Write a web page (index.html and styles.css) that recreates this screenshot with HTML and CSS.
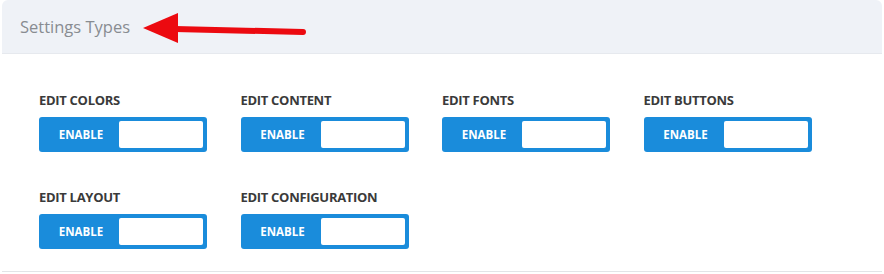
FILE: index.html
```html
<!DOCTYPE html>
<html>
<head>
<meta charset="utf-8">
<link rel="stylesheet" href="styles.css">
</head>
<body>
<div class="panel">
  <div class="panel-header">
    <span class="panel-title">Settings Types</span>
    <svg class="arrow" width="170" height="40" viewBox="0 0 170 40">
      <path d="M32 16 L160 19" stroke="#ec0a10" stroke-width="6" stroke-linecap="round" fill="none"/>
      <polygon points="0,15 35,0 35,30" fill="#ec0a10"/>
    </svg>
  </div>
  <div class="panel-body">
    <div class="setting">
      <div class="setting-label">Edit Colors</div>
      <div class="toggle"><span class="toggle-text">Enable</span><span class="toggle-box"></span></div>
    </div>
    <div class="setting">
      <div class="setting-label">Edit Content</div>
      <div class="toggle"><span class="toggle-text">Enable</span><span class="toggle-box"></span></div>
    </div>
    <div class="setting">
      <div class="setting-label">Edit Fonts</div>
      <div class="toggle"><span class="toggle-text">Enable</span><span class="toggle-box"></span></div>
    </div>
    <div class="setting">
      <div class="setting-label">Edit Buttons</div>
      <div class="toggle"><span class="toggle-text">Enable</span><span class="toggle-box"></span></div>
    </div>
    <div class="setting">
      <div class="setting-label">Edit Layout</div>
      <div class="toggle"><span class="toggle-text">Enable</span><span class="toggle-box"></span></div>
    </div>
    <div class="setting">
      <div class="setting-label">Edit Configuration</div>
      <div class="toggle"><span class="toggle-text">Enable</span><span class="toggle-box"></span></div>
    </div>
  </div>
</div>
</body>
</html>
```
FILE: styles.css
```css
* { box-sizing: border-box; }
html, body { margin: 0; padding: 0; background: #ffffff; }
body { font-family: "Open Sans", "Liberation Sans", sans-serif; }

.panel {
  margin-left: 2px;
  width: 880px;
  height: 272px;
  border-bottom: 1px solid #e2e4e7;
}

.panel-header {
  position: relative;
  height: 54px;
  background: #eff2f7;
  border-bottom: 1px solid #e6e9ee;
  border-radius: 6px 6px 0 0;
  display: flex;
  align-items: center;
  padding-left: 18px;
}

.panel-title {
  font-size: 16.5px;
  color: #888c91;
}

.arrow {
  position: absolute;
  left: 141px;
  top: 13px;
}

.panel-body {
  display: grid;
  grid-template-columns: repeat(4, 201.5px);
  row-gap: 37px;
  padding: 38px 0 0 37px;
}

.setting-label {
  font-size: 13px;
  line-height: 16px;
  font-weight: 700;
  color: #3a3a3a;
  text-transform: uppercase;
  letter-spacing: -0.3px;
}

.toggle {
  margin-top: 9px;
  width: 168px;
  height: 35px;
  background: #1a8cdb;
  border-radius: 3px;
  padding: 4px;
  display: flex;
}

.toggle-text {
  width: 76px;
  display: flex;
  align-items: center;
  justify-content: center;
  color: #ffffff;
  font-size: 11.5px;
  font-weight: 700;
  text-transform: uppercase;
}

.toggle-box {
  flex: 1;
  background: #ffffff;
  border-radius: 2px;
}
```
